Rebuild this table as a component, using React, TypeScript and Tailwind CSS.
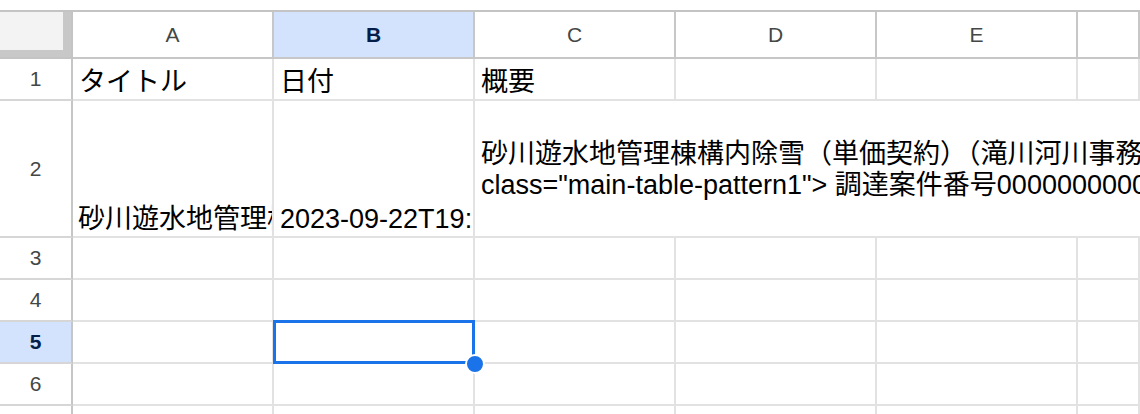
import React from "react";

const font = "font-['Liberation_Sans','Noto_Sans_CJK_JP',sans-serif]";

const colLetters = ["A", "B", "C", "D", "E", ""];

const HeaderCell: React.FC<{ label: string; active?: boolean }> = ({ label, active }) => (
  <div
    className={`flex items-center justify-center border-r-2 border-b-2 border-[#c7c7c7] text-[21px] ${
      active ? "bg-[#d3e3fd] font-bold text-[#041e49]" : "bg-white text-[#444746]"
    }`}
  >
    {label}
  </div>
);

const RowHeader: React.FC<{ n: number; active?: boolean }> = ({ n, active }) => (
  <div
    className={`flex items-center justify-center border-r-2 border-b-2 border-r-[#c4c7c5] border-b-[#d6d6d6] text-[21px] ${
      active ? "bg-[#d3e3fd] font-bold text-[#041e49]" : "bg-white text-[#444746]"
    }`}
  >
    {n}
  </div>
);

const Cell: React.FC<{ children?: React.ReactNode; className?: string }> = ({ children, className = "" }) => (
  <div
    className={`flex items-end overflow-hidden whitespace-nowrap border-r-2 border-b-2 border-[#e2e2e2] px-[6px] pb-[1px] text-[27px] leading-[31px] text-black ${className}`}
  >
    {children}
  </div>
);

export default function App() {
  return (
    <div className={`h-[414px] w-[1140px] overflow-hidden bg-white pt-[10px] ${font}`}>
      <div className="grid grid-cols-[73px_201px_201px_201px_201px_201px_1fr] grid-rows-[47px_42px_137px_42px_42px_42px_42px_42px] border-t-2 border-[#c4c4c4]">
        {/* corner */}
        <div className="border-r-2 border-b-2 border-[#c4c4c4] bg-[#c8c8c8]">
          <div className="h-[38px] w-[63px] bg-[#f3f3f3]" />
        </div>
        {colLetters.map((c, i) => (
          <HeaderCell key={i} label={c} active={c === "B"} />
        ))}

        {/* row 1 */}
        <RowHeader n={1} />
        <Cell>タイトル</Cell>
        <Cell>日付</Cell>
        <Cell>概要</Cell>
        <Cell />
        <Cell />
        <Cell />

        {/* row 2 */}
        <RowHeader n={2} />
        <Cell className="pl-[5px]">砂川遊水地管理棟構内除雪（単価契約）（滝川河川事務所）</Cell>
        <Cell>2023-09-22T19:30:00+09:00</Cell>
        <div className="col-span-4 overflow-hidden whitespace-nowrap border-b-2 border-[#e2e2e2] px-[6px] pt-[38px] text-[27px] leading-[31px] text-black">
          <div>砂川遊水地管理棟構内除雪（単価契約）（滝川河川事務所）&lt;/td&gt;</div>
          <div>class="main-table-pattern1"&gt; 調達案件番号0000000000000000000000</div>
        </div>

        {/* rows 3-7 */}
        {[3, 4, 5, 6, 7].map((r) => (
          <React.Fragment key={r}>
            <RowHeader n={r} active={r === 5} />
            <Cell />
            {r === 5 ? (
              <div className="relative border-r-2 border-b-2 border-[#e2e2e2]">
                <div className="absolute -left-px -right-[2px] -top-[2px] -bottom-[2px] border-[3px] border-[#1a73e8]" />
                <div className="absolute -right-[12px] -bottom-[12px] z-10 h-[20px] w-[20px] rounded-full border-2 border-white bg-[#1a73e8]" />
              </div>
            ) : (
              <Cell />
            )}
            <Cell />
            <Cell />
            <Cell />
            <Cell />
          </React.Fragment>
        ))}
      </div>
    </div>
  );
}
